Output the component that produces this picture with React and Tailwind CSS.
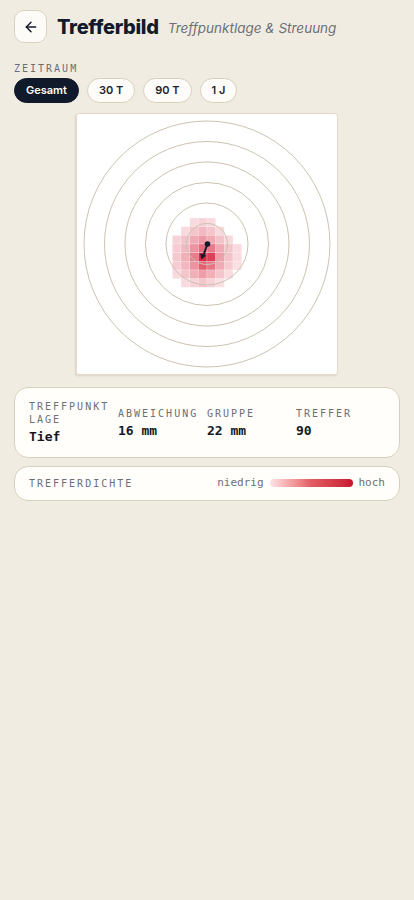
import React, { useState } from 'react';
import { ArrowLeft } from 'lucide-react';

const RANGES = ['Gesamt', '30 T', '90 T', '1 J'];

// Trefferdichte: Zeilen 12–19, Spalten 11–18 (30er Raster)
const HEAT = {
  12: { 13: 0.16, 14: 0.2, 15: 0.16 },
  13: { 12: 0.17, 13: 0.26, 14: 0.32, 15: 0.26, 16: 0.17 },
  14: { 11: 0.2, 12: 0.27, 13: 0.38, 14: 0.46, 15: 0.38, 16: 0.27, 17: 0.17 },
  15: { 11: 0.23, 12: 0.32, 13: 0.48, 14: 0.66, 15: 0.6, 16: 0.38, 17: 0.26, 18: 0.16 },
  16: { 11: 0.25, 12: 0.36, 13: 0.58, 14: 0.95, 15: 0.85, 16: 0.44, 17: 0.27, 18: 0.16 },
  17: { 11: 0.23, 12: 0.32, 13: 0.48, 14: 0.72, 15: 0.62, 16: 0.38, 17: 0.24, 18: 0.14 },
  18: { 11: 0.17, 12: 0.26, 13: 0.36, 14: 0.44, 15: 0.36, 16: 0.26, 17: 0.16 },
  19: { 12: 0.16, 13: 0.2, 14: 0.26, 15: 0.2, 16: 0.14 },
};

const CELL = 260 / 30;

const STATS = [
  { label: 'TREFFPUNKT LAGE', value: 'Tief' },
  { label: 'ABWEICHUNG', value: '16 mm' },
  { label: 'GRUPPE', value: '22 mm' },
  { label: 'TREFFER', value: '90' },
];

function Target() {
  const cells = [];
  Object.entries(HEAT).forEach(([row, cols]) => {
    Object.entries(cols).forEach(([col, v]) => {
      cells.push(
        <rect
          key={`${row}-${col}`}
          x={col * CELL}
          y={row * CELL}
          width={CELL}
          height={CELL}
          fill="#d8203a"
          fillOpacity={v}
          stroke="#ffffff"
          strokeOpacity={0.4}
          strokeWidth={0.6}
        />
      );
    });
  });

  return (
    <svg viewBox="0 0 260 260" className="w-full h-full block">
      {cells}
      {[1, 2, 3, 4, 5, 6].map(i => (
        <circle key={i} cx={130} cy={130} r={i * 20.5} fill="none" stroke="#cdc3b0" strokeWidth={1} />
      ))}
      <line x1={130.5} y1={130} x2={126.5} y2={141} stroke="#111a2b" strokeWidth={2} strokeLinecap="round" />
      <polygon points="124.2,145.5 123.3,139.6 129.3,141.6" fill="#111a2b" />
      <circle cx={130.5} cy={130} r={2.8} fill="#111a2b" />
    </svg>
  );
}

export default function App() {
  const [range, setRange] = useState('Gesamt');

  return (
    <div className="min-h-[900px] bg-[#f1ece2] px-[14px] pt-[10px] font-['Inter',sans-serif]">
      {/* Header */}
      <div className="flex items-center gap-[10px]">
        <button className="w-[33px] h-[33px] flex items-center justify-center rounded-[10px] border border-[#dcd2c1] bg-[#fdfbf7] text-[#111a2b]">
          <ArrowLeft size={16} strokeWidth={2.2} />
        </button>
        <h1 className="text-[20px] font-extrabold tracking-[-0.3px] text-[#131b2b] leading-none">Trefferbild</h1>
        <span className="text-[13.5px] italic text-[#6b7079] mt-[3px] ml-[-1px]">Treffpunktlage &amp; Streuung</span>
      </div>

      {/* Zeitraum */}
      <div className="mt-[19px] text-[10px] leading-[14px] tracking-[0.2em] text-[#6b6e75] font-['DejaVu_Sans_Mono',monospace]">
        ZEITRAUM
      </div>
      <div className="mt-[2px] flex gap-2">
        {RANGES.map(r => (
          <button
            key={r}
            onClick={() => setRange(r)}
            className={`h-[25px] px-[11px] rounded-full border text-[11px] font-semibold leading-none ${
              range === r
                ? 'bg-[#111a2b] border-[#111a2b] text-white'
                : 'bg-[#fefcf8] border-[#d9cfbe] text-[#1f2430]'
            }`}
          >
            {r}
          </button>
        ))}
      </div>

      {/* Zielscheibe */}
      <div className="mt-[10px] mx-auto w-[262px] h-[262px] bg-white border border-[#e3dacb] rounded-[3px] shadow-[-1px_1px_2px_rgba(120,100,70,0.18)]">
        <Target />
      </div>

      {/* Kennzahlen */}
      <div className="mt-3 rounded-[14px] border border-[#d9cfbe] bg-[#fffefb] px-[14px] py-3 grid grid-cols-4 items-center font-['DejaVu_Sans_Mono',monospace]">
        {STATS.map(s => (
          <div key={s.label}>
            <div className="text-[10px] leading-[13px] tracking-[0.2em] text-[#6b6e75] pr-1">{s.label}</div>
            <div className="mt-[3px] text-[13px] leading-[16px] font-semibold text-[#14181f]">{s.value}</div>
          </div>
        ))}
      </div>

      {/* Trefferdichte */}
      <div className="mt-2 rounded-[14px] border border-[#d9cfbe] bg-[#fffefb] px-[14px] py-[8px] flex items-center font-['DejaVu_Sans_Mono',monospace]">
        <span className="text-[10px] leading-[15px] tracking-[0.2em] text-[#6b6e75]">TREFFERDICHTE</span>
        <div className="ml-auto flex items-center gap-[6px] text-[11px] text-[#6b6e75]">
          <span>niedrig</span>
          <div className="w-[83px] h-[8px] rounded-full bg-gradient-to-r from-[#fbe4e7] via-[#e25a62] to-[#c8102e]" />
          <span>hoch</span>
        </div>
      </div>
    </div>
  );
}
